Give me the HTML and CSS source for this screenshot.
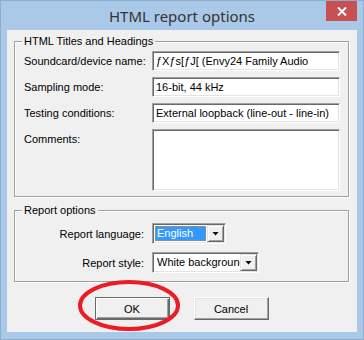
FILE: index.html
```html
<!DOCTYPE html>
<html>
<head>
<meta charset="utf-8">
<title>HTML report options</title>
<link rel="stylesheet" href="styles.css">
</head>
<body>
<div class="window">
  <div class="titlebar">
    <span class="title">HTML report options</span>
    <button class="close" type="button">
      <svg width="10" height="9" viewBox="0 0 10 9"><path d="M1 0.5 L9 8.5 M9 0.5 L1 8.5" stroke="#fff" stroke-width="2"/></svg>
    </button>
  </div>

  <div class="client">
    <fieldset class="group">
      <legend>HTML Titles and Headings</legend>
      <div class="rows">
        <label>Soundcard/device name:</label>
        <div class="edit">ƒXƒs[ƒJ[ (Envy24 Family Audio</div>
        <label>Sampling mode:</label>
        <div class="edit">16-bit, 44 kHz</div>
        <label>Testing conditions:</label>
        <div class="edit">External loopback (line-out - line-in)</div>
        <label class="top">Comments:</label>
        <div class="edit memo"></div>
      </div>
    </fieldset>

    <fieldset class="group group-opts">
      <legend>Report options</legend>
      <div class="rows options">
        <label>Report language:</label>
        <div class="combo combo-lang">
          <span class="combo-text"><span class="sel">English</span></span>
          <span class="arrow"></span>
        </div>
        <label>Report style:</label>
        <div class="combo combo-style">
          <span class="combo-text"><span class="plain">White background</span></span>
          <span class="arrow"></span>
        </div>
      </div>
    </fieldset>

    <div class="buttons">
      <button class="btn btn-default" type="button">OK</button>
      <button class="btn" type="button">Cancel</button>
    </div>
  </div>

  <!-- red marker drawn over the OK button -->
  <svg class="marker" width="108" height="58" viewBox="0 0 108 58">
    <ellipse cx="54" cy="28.5" rx="49" ry="23.5" fill="none" stroke="#ec1c24" stroke-width="4"/>
  </svg>
</div>
</body>
</html>
```

FILE: styles.css
```css
body {
  margin: 0;
}

.window {
  position: relative;
  width: 364px;
  height: 340px;
  box-sizing: border-box;
  border: 1px solid #8eaed0;
  background: #aac9e9;
  padding: 0 6px 7px 6px;
  display: flex;
  flex-direction: column;
  font-family: "Liberation Sans", Arial, sans-serif;
  font-size: 11px;
  color: #000;
}

.titlebar {
  height: 29px;
  margin: 0 -6px;
  display: grid;
  grid-template-columns: 1fr auto 1fr;
  align-items: start;
}

.title {
  grid-column: 2;
  font-family: "Noto Sans", "Open Sans", sans-serif;
  font-size: 15px;
  line-height: 20px;
  padding-top: 5px;
  color: #333;
}

.close {
  grid-column: 3;
  justify-self: end;
  width: 31px;
  height: 20px;
  margin-right: 6px;
  padding: 0;
  border: 0;
  background: #c75050;
  display: flex;
  align-items: center;
  justify-content: center;
}

.client {
  flex: 1;
  background: #f0f0f0;
  padding: 4px 8px 0 7px;
  display: flex;
  flex-direction: column;
}

.group {
  margin: 0;
  min-width: 0;
  padding: 3px 8px 5px 9px;
  border: 1px solid #a0a0a0;
  box-shadow: inset 1px 1px #fff, 1px 1px #fff;
}

.group legend {
  margin-left: -2px;
  padding: 0 2px;
  line-height: 14px;
  background: #f0f0f0;
}

.group-opts {
  margin-top: 6px;
  padding-bottom: 8px;
}

.rows {
  display: grid;
  grid-template-columns: 128px 188px;
  row-gap: 6px;
}

.rows label {
  align-self: center;
}

.rows label.top {
  align-self: start;
  padding-top: 4px;
}

.edit {
  height: 20px;
  box-sizing: border-box;
  border: 1px solid;
  border-color: #a0a0a0 #fff #fff #a0a0a0;
  box-shadow: inset 1px 1px #696969, inset -1px -1px #e3e3e3;
  background: #fff;
  padding: 1px 3px;
  line-height: 16px;
  white-space: nowrap;
  overflow: hidden;
}

.memo {
  height: 62px;
}

.options {
  grid-template-columns: 128px auto;
  row-gap: 8px;
  padding-top: 3px;
}

.options label {
  text-align: right;
  padding-right: 8px;
}

.combo {
  display: flex;
  height: 21px;
  box-sizing: border-box;
  border: 1px solid;
  border-color: #a0a0a0 #fff #fff #a0a0a0;
  box-shadow: inset 1px 1px #696969, inset -1px -1px #e3e3e3;
  background: #fff;
  padding: 1px;
}

.combo-lang {
  width: 74px;
}

.combo-style {
  width: 107px;
}

.combo-text {
  flex: 1;
  min-width: 0;
  overflow: hidden;
  white-space: nowrap;
  padding: 1px;
}

.sel {
  display: block;
  height: 100%;
  box-sizing: border-box;
  background: #3399ff;
  color: #fff;
  border: 1px dotted #d8881e;
  padding-left: 1px;
  line-height: 13px;
}

.plain {
  display: block;
  padding-left: 2px;
  line-height: 15px;
}

.arrow {
  width: 17px;
  box-sizing: border-box;
  background: #f0f0f0;
  border: 1px solid;
  border-color: #e3e3e3 #696969 #696969 #e3e3e3;
  box-shadow: inset 1px 1px #fff, inset -1px -1px #a0a0a0;
  display: flex;
  align-items: center;
  justify-content: center;
}

.arrow::after {
  content: "";
  width: 7px;
  height: 4px;
  background: #000;
  clip-path: polygon(0 0, 100% 0, 50% 100%);
}

.buttons {
  display: flex;
  justify-content: center;
  gap: 24px;
  margin-top: 15px;
}

.btn {
  width: 75px;
  height: 23px;
  padding: 0;
  font: inherit;
  color: #000;
  background: #f0f0f0;
  border: 1px solid;
  border-color: #fff #696969 #696969 #fff;
  box-shadow: inset -1px -1px #a0a0a0, inset 1px 1px #e3e3e3;
}

.btn-default {
  border-color: #696969;
  box-shadow: inset 1px 1px #fff, inset -1px -1px #696969, inset -2px -2px #a0a0a0;
}

.marker {
  position: absolute;
  left: 74px;
  top: 276px;
}
```
